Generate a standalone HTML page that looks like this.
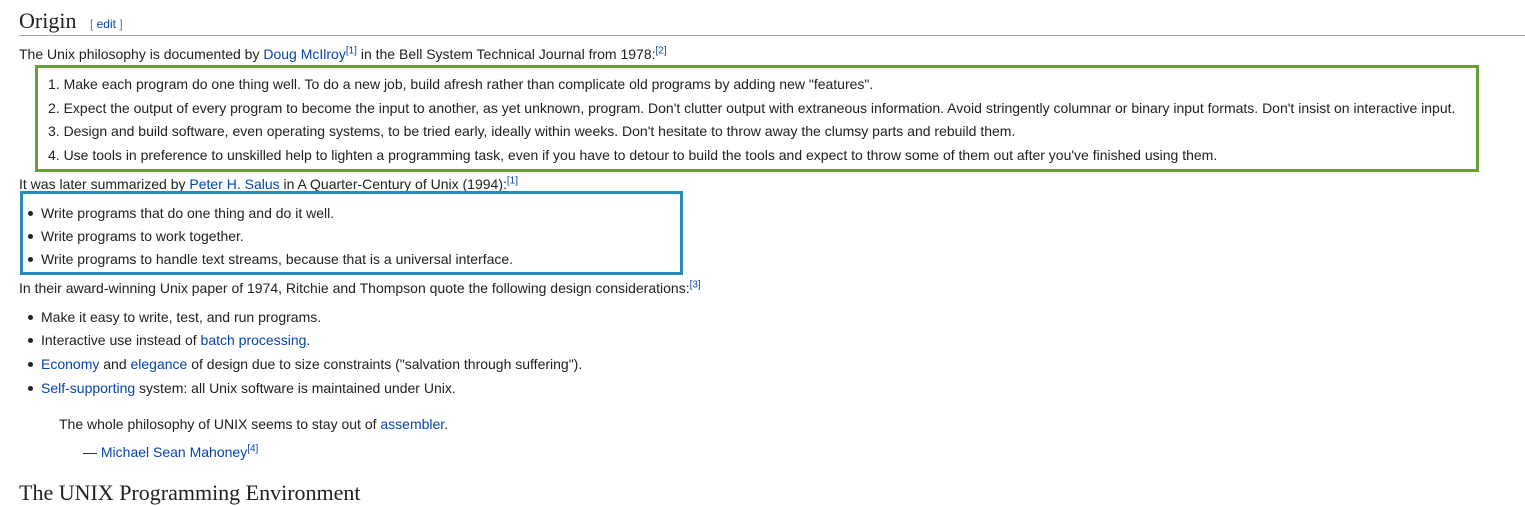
<!DOCTYPE html>
<html><head><style>
body{margin:0;width:1525px;height:490px;overflow:hidden;background:#fff;font-family:"Liberation Sans",sans-serif;font-size:14px;color:#202122;position:relative}
.a{position:absolute;white-space:nowrap}
a{color:#0645ad;text-decoration:none}
sup{font-size:10px;line-height:0}
.h{font-family:"Liberation Serif",serif;font-size:22px}
.dot{display:inline-block;width:5px;height:5px;border-radius:50%;background:#202122;margin-right:8px;vertical-align:middle;position:relative;top:-1px}
</style></head><body>
<div class="a h" style="left:19px;top:8px">Origin <span style="font-family:'Liberation Sans';font-size:12px;color:#72777d;margin-left:8px">[ <a>edit</a> ]</span></div>
<div class="a" style="left:19px;top:35px;width:1506px;height:1px;background:#a2a9b1"></div>
<div class="a" style="left:19px;top:46px">The Unix philosophy is documented by <a>Doug McIlroy</a><sup><a>[1]</a></sup> in the Bell System Technical Journal from 1978:<sup><a>[2]</a></sup></div>
<div class="a" style="left:35px;top:65px;width:1438px;height:101px;border:3px solid #6a9e3a"></div>
<div class="a" style="left:48px;top:76px">1. Make each program do one thing well. To do a new job, build afresh rather than complicate old programs by adding new "features".</div>
<div class="a" style="left:48px;top:100px">2. Expect the output of every program to become the input to another, as yet unknown, program. Don't clutter output with extraneous information. Avoid stringently columnar or binary input formats. Don't insist on interactive input.</div>
<div class="a" style="left:48px;top:123px">3. Design and build software, even operating systems, to be tried early, ideally within weeks. Don't hesitate to throw away the clumsy parts and rebuild them.</div>
<div class="a" style="left:48px;top:147px">4. Use tools in preference to unskilled help to lighten a programming task, even if you have to detour to build the tools and expect to throw some of them out after you've finished using them.</div>
<div class="a" style="left:19px;top:176px">It was later summarized by <a>Peter H. Salus</a> in A Quarter-Century of Unix (1994):<sup><a>[1]</a></sup></div>
<div class="a" style="left:20px;top:191px;width:657px;height:78px;border:3px solid #2a8ab8"></div>
<div class="a" style="left:28px;top:205px"><span class="dot"></span>Write programs that do one thing and do it well.</div>
<div class="a" style="left:28px;top:228px"><span class="dot"></span>Write programs to work together.</div>
<div class="a" style="left:28px;top:251px"><span class="dot"></span>Write programs to handle text streams, because that is a universal interface.</div>
<div class="a" style="left:19px;top:280px">In their award-winning Unix paper of 1974, Ritchie and Thompson quote the following design considerations:<sup><a>[3]</a></sup></div>
<div class="a" style="left:28px;top:309px"><span class="dot"></span>Make it easy to write, test, and run programs.</div>
<div class="a" style="left:28px;top:332px"><span class="dot"></span>Interactive use instead of <a>batch processing</a>.</div>
<div class="a" style="left:28px;top:356px"><span class="dot"></span><a>Economy</a> and <a>elegance</a> of design due to size constraints ("salvation through suffering").</div>
<div class="a" style="left:28px;top:380px"><span class="dot"></span><a>Self-supporting</a> system: all Unix software is maintained under Unix.</div>
<div class="a" style="left:59px;top:416px">The whole philosophy of UNIX seems to stay out of <a>assembler</a>.</div>
<div class="a" style="left:83px;top:444px">— <a>Michael Sean Mahoney</a><sup><a>[4]</a></sup></div>
<div class="a h" style="left:19px;top:480px">The UNIX Programming Environment</div>
</body></html>
